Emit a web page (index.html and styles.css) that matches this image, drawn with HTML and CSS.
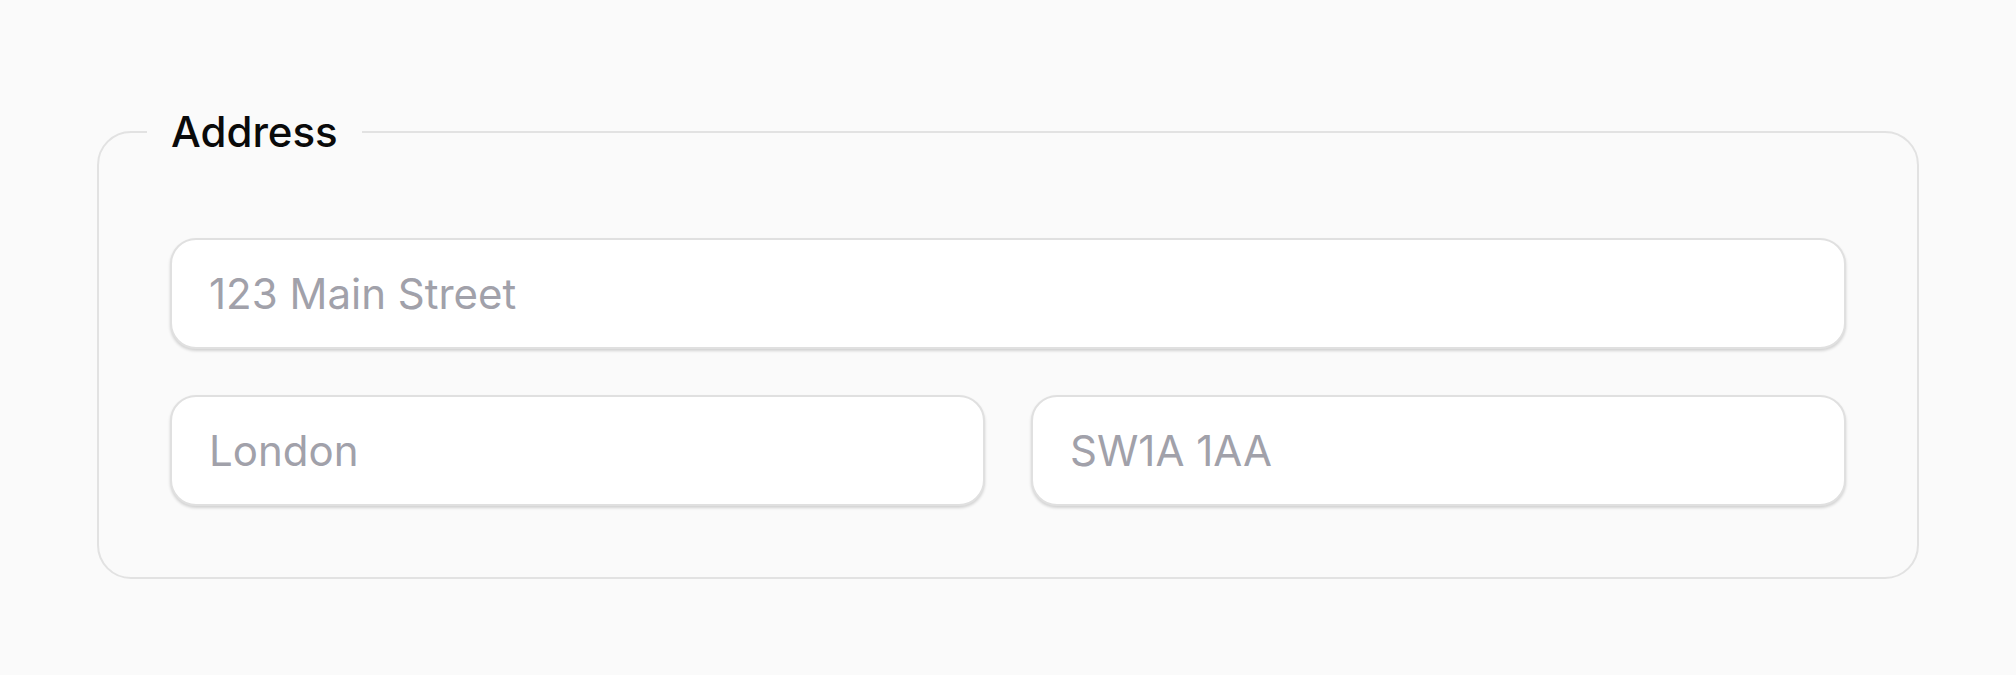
FILE: index.html
```html
<!DOCTYPE html>
<html lang="en">
<head>
    <meta charset="UTF-8">
    <meta name="viewport" content="width=device-width, initial-scale=1.0">
    <title>Address</title>
    <link rel="stylesheet" href="styles.css">
</head>
<body>
    <form class="address-form">
        <fieldset class="address-group">
            <legend>Address</legend>
            <div class="field-grid">
                <input type="text" class="field field-wide" placeholder="123 Main Street">
                <input type="text" class="field" placeholder="London">
                <input type="text" class="field" placeholder="SW1A 1AA">
            </div>
        </fieldset>
    </form>
</body>
</html>
```

FILE: styles.css
```css
body {
    font-family: Inter, "Noto Sans", sans-serif;
    background-color: #fafafa;
    margin: 0;
    padding-top: 10px;
    box-sizing: border-box;
    min-height: 100vh;
    display: flex;
    justify-content: center;
    align-items: center;
}
.address-form {
    width: 1822px;
}
.address-group {
    margin: 0;
    border: 2px solid #e2e2e2;
    border-radius: 34px;
    padding: 81px 71px 71px;
}
.address-group legend {
    margin-left: -23px;
    padding: 0 24px;
    font-size: 42px;
    font-weight: 500;
    line-height: 50px;
    color: #0a0a0a;
}
.field-grid {
    display: grid;
    grid-template-columns: 1fr 1fr;
    gap: 46px;
}
.field {
    height: 111px;
    box-sizing: border-box;
    border: 2px solid #e0e0e0;
    border-radius: 26px;
    padding: 0 37px;
    background-color: #fff;
    font-family: inherit;
    font-size: 42px;
    color: #18181b;
    box-shadow: 0 2px 3px rgba(0, 0, 0, 0.16);
    outline: none;
}
.field::placeholder {
    color: #a1a1aa;
}
.field-wide {
    grid-column: 1 / -1;
}
```
